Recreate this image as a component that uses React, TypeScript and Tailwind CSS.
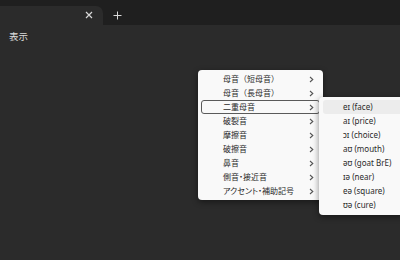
import React from "react";

const mainItems = [
  "母音（短母音）",
  "母音（長母音）",
  "二重母音",
  "破裂音",
  "摩擦音",
  "破擦音",
  "鼻音",
  "側音・接近音",
  "アクセント・補助記号",
];

const subItems = [
  "eɪ (face)",
  "aɪ (price)",
  "ɔɪ (choice)",
  "aʊ (mouth)",
  "əʊ (goat BrE)",
  "ɪə (near)",
  "eə (square)",
  "ʊə (cure)",
];

function Chevron() {
  return (
    <svg width="5" height="7" viewBox="0 0 5 7" className="shrink-0">
      <path d="M1 1 L3.8 3.5 L1 6" fill="none" stroke="#555" strokeWidth="1.1" />
    </svg>
  );
}

export default function App() {
  const font = { fontFamily: '"Noto Sans", "Noto Sans CJK JP", sans-serif' };
  return (
    <div className="relative w-[400px] h-[260px] overflow-hidden bg-[#2b2b2b]" style={font}>
      <div className="h-[25px] bg-[#1f1f1f] flex items-end">
        <div className="w-[103px] h-[19px] bg-[#2b2b2b] rounded-tr-[7px] flex items-center justify-end pr-[10px] pb-[1px]">
          <svg width="8" height="8" viewBox="0 0 8 8">
            <path d="M1 1 L7 7 M7 1 L1 7" stroke="#d8d8d8" strokeWidth="1.2" />
          </svg>
        </div>
        <div className="h-[19px] flex items-center pl-[10px] pb-[1px]">
          <svg width="9" height="9" viewBox="0 0 9 9">
            <path d="M4.5 0.5 V8.5 M0.5 4.5 H8.5" stroke="#d8d8d8" strokeWidth="1" />
          </svg>
        </div>
      </div>
      <div className="h-[24px] flex items-center pl-[9px]">
        <span className="text-[9.5px] text-[#dcdcdc] leading-none">表示</span>
      </div>

      <div className="absolute left-[198px] top-[70px] w-[125px] bg-[#f9f9f9] rounded-[4px] shadow-[0_2px_6px_rgba(0,0,0,0.45)] py-[2px] px-[3px]">
        {mainItems.map((t, i) => (
          <div
            key={t}
            className={
              "h-[14px] flex items-center pl-[21px] pr-[5px] rounded-[3px] " +
              (i === 2 ? "border border-[#5a5a5a]" : "border border-transparent")
            }
          >
            <span
              className={
                "flex-1 text-[8px] leading-none text-[#2a2a2a] whitespace-nowrap " +
                (t.includes("・") ? "[font-feature-settings:'palt']" : "")
              }
            >
              {t}
            </span>
            <Chevron />
          </div>
        ))}
      </div>

      <div className="absolute left-[319px] top-[97px] w-[84px] bg-[#f9f9f9] rounded-[4px] shadow-[0_2px_6px_rgba(0,0,0,0.45)] py-[3px] pl-[4px]">
        {subItems.map((t, i) => (
          <div
            key={t}
            className={
              "h-[14px] flex items-center pl-[20px] rounded-[3px] " + (i === 0 ? "bg-[#ececec]" : "")
            }
          >
            <span className="text-[8px] leading-none text-[#2a2a2a] whitespace-nowrap">{t}</span>
          </div>
        ))}
      </div>
    </div>
  );
}
